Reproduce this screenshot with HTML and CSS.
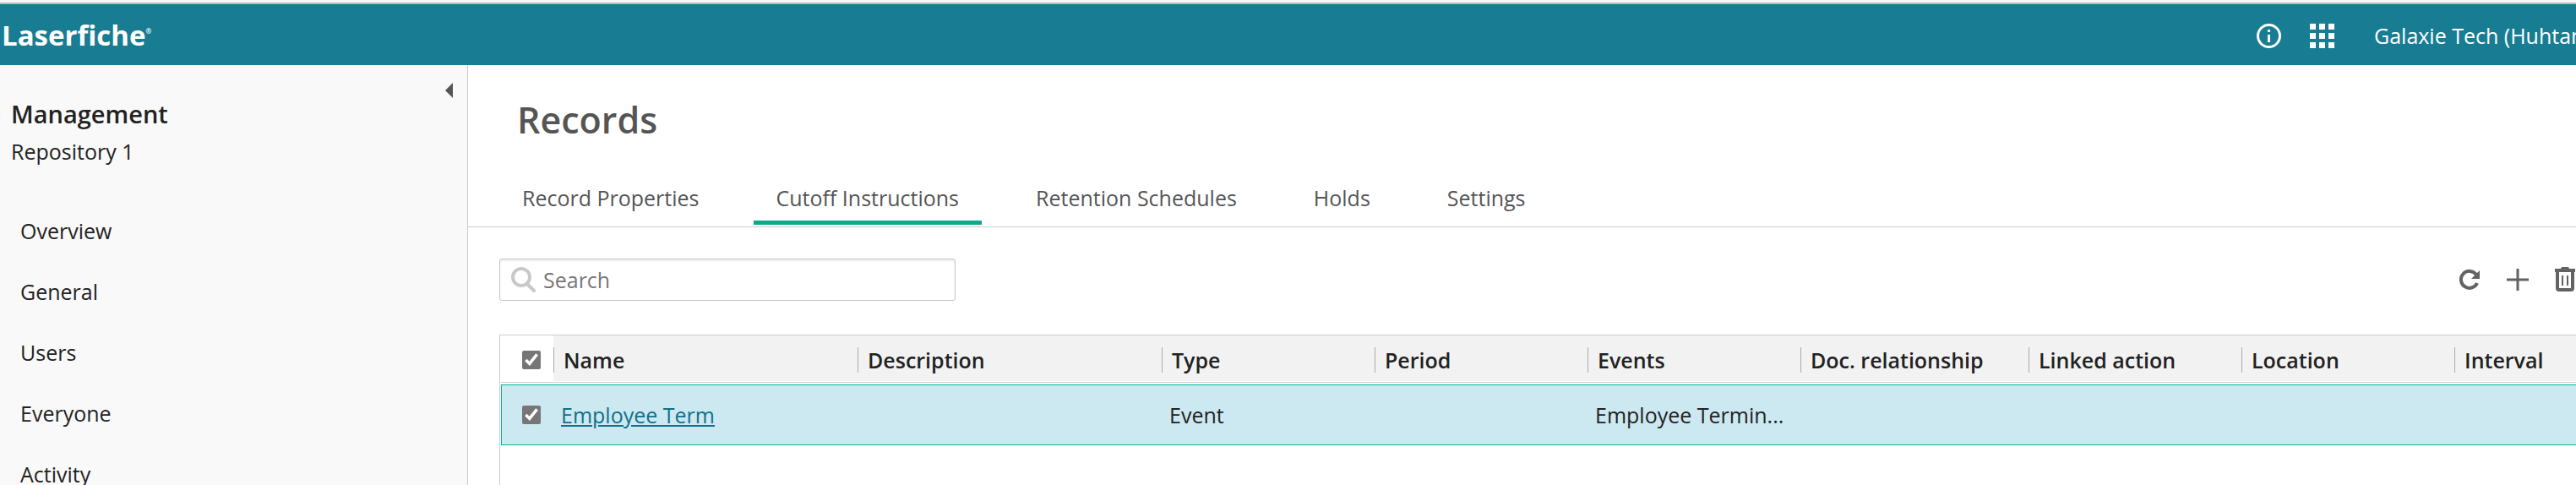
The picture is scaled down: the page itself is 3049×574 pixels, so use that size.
FILE: index.html
```
<!DOCTYPE html>
<html lang="en">
<head>
    <meta charset="utf-8">
    <title>Records - Laserfiche</title>
    <link rel="stylesheet" href="styles.css">
</head>
<body>
<header class="topbar">
    <a href="#" class="logo">Laserfiche<sup>®</sup></a>
    <div class="topbar-right">
        <button class="icon-button" aria-label="Information">
            <svg width="29" height="29" viewBox="0 0 29 29">
                <circle cx="14.5" cy="14.5" r="13" fill="none" stroke="#fff" stroke-width="3"/>
                <path d="M13 7h3v3h-3zM13 13h3v9h-3z" fill="#fff"/>
            </svg>
        </button>
        <button class="icon-button" aria-label="Applications">
            <svg width="29" height="29" viewBox="0 0 29 29" fill="#fff">
                <path d="M0 0h7v7H0zM11 0h7v7h-7zM22 0h7v7h-7zM0 11h7v7H0zM11 11h7v7h-7zM22 11h7v7h-7zM0 22h7v7H0zM11 22h7v7h-7zM22 22h7v7h-7z"/>
            </svg>
        </button>
        <a href="#" class="account">Galaxie Tech (Huhtam</a>
    </div>
</header>

<div class="layout">
    <aside class="sidebar">
        <button class="collapse" aria-label="Collapse sidebar">
            <svg width="9" height="18" viewBox="0 0 9 18"><path d="M9 0v18L0 9z" fill="#555"/></svg>
        </button>
        <h2>Management</h2>
        <p class="repository">Repository 1</p>
        <nav class="side-nav">
            <a href="#">Overview</a>
            <a href="#">General</a>
            <a href="#">Users</a>
            <a href="#">Everyone</a>
            <a href="#">Activity</a>
        </nav>
    </aside>

    <main class="content">
        <h1>Records</h1>
        <nav class="tabs">
            <a href="#">Record Properties</a>
            <a href="#" class="active">Cutoff Instructions</a>
            <a href="#">Retention Schedules</a>
            <a href="#">Holds</a>
            <a href="#">Settings</a>
        </nav>

        <div class="toolbar">
            <label class="search">
                <svg width="29" height="30" viewBox="0 0 29 30" fill="none" stroke="#c8c8c8">
                    <circle cx="12" cy="12" r="10" stroke-width="4"/>
                    <path d="M19 20l8 8" stroke-width="4" stroke-linecap="round"/>
                </svg>
                <input type="search" placeholder="Search" aria-label="Search">
            </label>
            <div class="actions">
                <button class="icon-button" aria-label="Refresh">
                    <svg width="26" height="26" viewBox="0 0 26 26">
                        <path d="M20 7A10 10 0 1 0 21 17" fill="none" stroke="#636363" stroke-width="4"/>
                        <path d="M24 2v10H14z" fill="#636363"/>
                    </svg>
                </button>
                <button class="icon-button" aria-label="Add">
                    <svg width="26" height="26" viewBox="0 0 26 26"><path d="M13 0v26M0 13h26" stroke="#636363" stroke-width="3"/></svg>
                </button>
                <button class="icon-button" aria-label="Delete">
                    <svg width="26" height="30" viewBox="0 0 26 30">
                        <path d="M1 2h7l1-2h8l1 2h7v4H1z" fill="#636363"/>
                        <path d="M4 4v21q0 2 2 2h14q2 0 2-2V4" fill="none" stroke="#636363" stroke-width="4"/>
                        <path d="M10 10v12M16 10v12" stroke="#636363" stroke-width="2"/>
                    </svg>
                </button>
            </div>
        </div>

        <div class="grid">
            <table>
                <colgroup>
                    <col class="col-check">
                    <col class="col-wide">
                    <col class="col-wide">
                    <col class="col-normal">
                    <col class="col-normal">
                    <col class="col-normal">
                    <col class="col-relationship">
                    <col class="col-normal">
                    <col class="col-normal">
                    <col class="col-normal">
                </colgroup>
                <thead>
                    <tr>
                        <th><input type="checkbox" aria-label="Select all" checked></th>
                        <th><span>Name</span></th>
                        <th><span>Description</span></th>
                        <th><span>Type</span></th>
                        <th><span>Period</span></th>
                        <th><span>Events</span></th>
                        <th><span>Doc. relationship</span></th>
                        <th><span>Linked action</span></th>
                        <th><span>Location</span></th>
                        <th><span>Interval</span></th>
                    </tr>
                </thead>
                <tbody>
                    <tr class="selected">
                        <td><input type="checkbox" aria-label="Select Employee Term" checked></td>
                        <td><a href="#">Employee Term</a></td>
                        <td></td>
                        <td>Event</td>
                        <td></td>
                        <td>Employee Termin...</td>
                        <td></td>
                        <td></td>
                        <td></td>
                        <td></td>
                    </tr>
                </tbody>
            </table>
        </div>
    </main>
</div>
</body>
</html>
```
FILE: styles.css
```
* {
    box-sizing: border-box;
}

body {
    margin: 0;
    height: 100vh;
    display: flex;
    flex-direction: column;
    overflow: hidden;
    border-top: 3px solid #f5f5f5;
    background: #fff;
    color: #222;
    font-family: "Open Sans", "Noto Sans", sans-serif;
    font-size: 25px;
    line-height: 36px;
}

a {
    color: inherit;
    text-decoration: none;
}

button {
    padding: 0;
    border: none;
    background: none;
    cursor: pointer;
}

svg {
    display: block;
}

/* Top bar */
.topbar {
    flex: none;
    display: flex;
    justify-content: space-between;
    align-items: flex-start;
    height: 74px;
    padding: 20px 0 0 2px;
    border-top: 2px solid #bbb;
    background: #187d92;
    color: #fff;
}

.logo {
    font-size: 33px;
    font-weight: 700;
    line-height: 34px;
}

.logo sup {
    font-size: 8px;
    vertical-align: 14px;
    line-height: 0;
}

.topbar-right {
    display: flex;
    gap: 34px;
}

.account {
    width: 252px;
    padding-left: 13px;
    overflow: hidden;
    line-height: 34px;
    white-space: nowrap;
}

/* Sidebar */
.layout {
    flex: 1;
    display: flex;
    min-height: 0;
}

.sidebar {
    flex: none;
    display: flex;
    flex-direction: column;
    width: 554px;
    padding: 21px 13px 0;
    border-right: 1px solid #ccc;
    background: #f9f9f9;
}

.collapse {
    align-self: flex-end;
    margin-right: 4px;
}

.sidebar h2 {
    margin: 0;
    font-size: 29px;
    font-weight: 600;
    line-height: 38px;
}

.repository {
    margin: 7px 0 40px;
}

.side-nav {
    display: flex;
    flex-direction: column;
}

.side-nav a {
    padding: 18px 11px;
}

/* Content */
.content {
    flex: 1;
    display: flex;
    flex-direction: column;
    min-width: 0;
}

h1 {
    margin: 35px 0 0 58px;
    color: #555;
    font-size: 43px;
    font-weight: 600;
    line-height: 60px;
}

.tabs {
    display: flex;
    gap: 37px;
    margin-top: 37px;
    padding: 0 37px 2px;
    border-bottom: 1px solid #ccc;
    color: #555;
}

.tabs a {
    padding: 7px 27px 9px;
    border-bottom: 5px solid transparent;
}

.tabs .active {
    border-bottom-color: #0fa88a;
}

.toolbar {
    display: flex;
    justify-content: space-between;
    align-items: center;
    padding: 37px 0 40px 37px;
}

.search {
    display: flex;
    align-items: center;
    gap: 9px;
    width: 540px;
    height: 50px;
    padding: 0 13px;
    border: 1px solid #c5c5c5;
    border-radius: 3px;
    box-shadow: inset 0 2px 2px #eee;
}

.search input {
    flex: 1;
    min-width: 0;
    padding: 0;
    border: none;
    outline: none;
    background: none;
    font: inherit;
}

.search input::placeholder {
    color: #777;
}

.actions {
    display: flex;
    align-items: center;
    gap: 30px;
}

/* Records grid */
.grid {
    flex: 1;
    margin-left: 37px;
    padding-left: 1px;
    overflow: hidden;
    border-top: 1px solid #ccc;
    border-left: 1px solid #ccc;
}

table {
    width: 2564px;
    table-layout: fixed;
    border-collapse: separate;
    border-spacing: 0;
}

.col-check {
    width: 62px;
}

.col-wide {
    width: 360px;
}

.col-normal {
    width: 252px;
}

.col-relationship {
    width: 270px;
}

th {
    height: 56px;
    padding: 3px 0 0;
    border-bottom: 1px solid #ccc;
    background: #f2f2f2;
    box-shadow: inset 0 -1px #fff;
    font-weight: 600;
    text-align: left;
}

th:first-child {
    background: #fff;
}

th span {
    display: block;
    height: 30px;
    padding-left: 11px;
    border-left: 1px solid #aaa;
    line-height: 30px;
}

/* gap between the header line and the first row */
thead::after {
    content: "";
    display: table-row;
    height: 2px;
}

td {
    height: 72px;
    padding: 0 9px;
    overflow: hidden;
    white-space: nowrap;
    text-overflow: ellipsis;
}

th:first-child,
td:first-child {
    padding-left: 25px;
}

.selected td {
    border-top: 1px solid #00b894;
    border-bottom: 1px solid #00b894;
    background: #cce8f0;
}

.selected td:first-child {
    padding-left: 24px;
    border-left: 1px solid #00b894;
}

td a {
    color: #127088;
    text-decoration: underline;
}

input[type="checkbox"] {
    display: block;
    width: 22px;
    height: 22px;
    margin: 0;
    accent-color: #767676;
}
```
